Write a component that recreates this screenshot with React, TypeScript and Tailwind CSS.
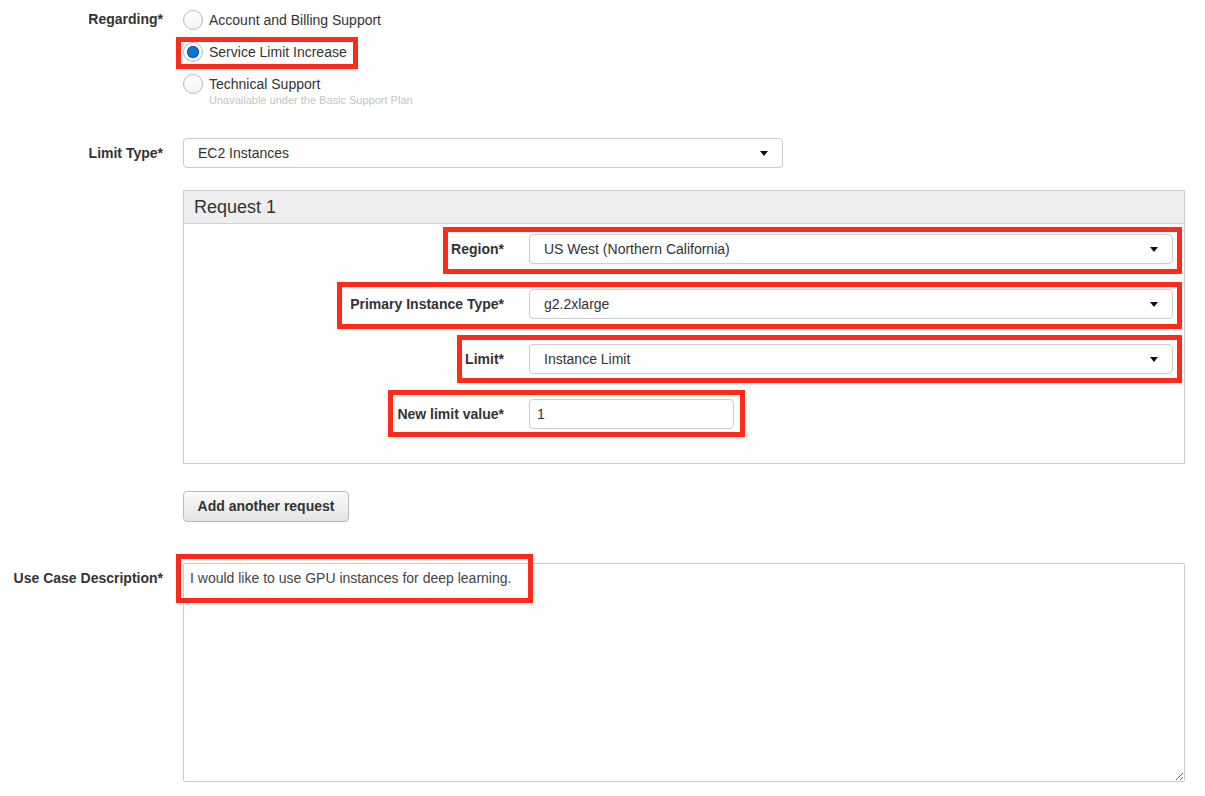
import React from 'react';

const RED = 'border-[5px] border-[#ff2a1a]';

const Radio = ({ checked }: { checked?: boolean }) => (
  <span className="flex h-[20px] w-[20px] shrink-0 items-center justify-center rounded-full border border-[#b9b9b9] bg-gradient-to-b from-white to-[#f3f3f3]">
    {checked && (
      <span className="h-[12px] w-[12px] rounded-full bg-[#0b74d1] shadow-[inset_0_0_0_1px_#0a5fae]" />
    )}
  </span>
);

const Caret = () => (
  <svg width="8" height="5" viewBox="0 0 8 5" className="shrink-0">
    <path d="M0 0 H8 L4 5 Z" fill="#111" />
  </svg>
);

const Select = ({ value, className }: { value: string; className: string }) => (
  <div
    className={`flex h-[30px] items-center justify-between rounded-[4px] border border-[#cccccc] bg-white pl-[14px] pr-[14px] text-[14px] text-[#333] ${className}`}
  >
    <span>{value}</span>
    <Caret />
  </div>
);

const RequestRow = ({
  label,
  children,
  box,
}: {
  label: string;
  children: React.ReactNode;
  box: string;
}) => (
  <div className="relative flex h-[30px] items-center">
    <div className="w-[320px] text-right text-[14px] font-bold text-[#333]">{label}</div>
    <div className="ml-[25px] flex">{children}</div>
    <div className={`absolute ${RED} ${box}`} />
  </div>
);

export default function App() {
  return (
    <div className="h-[796px] w-[1205px] overflow-hidden bg-white font-['Liberation_Sans',Arial,sans-serif] text-[14px] text-[#333]">
      {/* Regarding */}
      <div className="flex pt-[9px]">
        <div className="w-[163px] text-right font-bold leading-[20px]">Regarding*</div>
        <div className="ml-[20px] flex flex-col gap-[12px] pt-[1px]">
          <div className="flex h-[20px] items-center gap-[6px]">
            <Radio />
            <span>Account and Billing Support</span>
          </div>
          <div className="relative flex h-[20px] items-center gap-[6px]">
            <Radio checked />
            <span>Service Limit Increase</span>
            <div className={`absolute left-[-7px] top-[-5px] h-[32px] w-[182px] ${RED}`} />
          </div>
          <div className="flex items-start gap-[6px]">
            <Radio />
            <div className="flex flex-col">
              <span className="leading-[20px]">Technical Support</span>
              <span className="text-[11px] leading-[13px] text-[#c4c4c4]">
                Unavailable under the Basic Support Plan
              </span>
            </div>
          </div>
        </div>
      </div>

      {/* Limit type */}
      <div className="mt-[31px] flex items-center">
        <div className="w-[163px] text-right font-bold">Limit Type*</div>
        <Select value="EC2 Instances" className="ml-[20px] w-[600px]" />
      </div>

      {/* Request panel */}
      <div className="ml-[183px] mt-[22px] w-[1002px] border border-[#cccccc]">
        <div className="flex h-[33px] items-center border-b border-[#d5d5d5] bg-[#eeeeee] pl-[10px] text-[18px] font-light text-[#333]">
          Request 1
        </div>
        <div className="flex flex-col gap-[25px] pb-[34px] pr-[10px] pt-[10px]">
          <RequestRow label="Region*" box="left-[259px] top-[-7px] h-[47px] w-[739px]">
            <Select value="US West (Northern California)" className="w-[644px]" />
          </RequestRow>
          <RequestRow label="Primary Instance Type*" box="left-[153px] top-[-7px] h-[47px] w-[845px]">
            <Select value="g2.2xlarge" className="w-[644px]" />
          </RequestRow>
          <RequestRow label="Limit*" box="left-[273px] top-[-9px] h-[48px] w-[725px]">
            <Select value="Instance Limit" className="w-[644px]" />
          </RequestRow>
          <RequestRow label="New limit value*" box="left-[204px] top-[-9px] h-[47px] w-[357px]">
            <div className="flex h-[30px] w-[205px] items-center rounded-[4px] border border-[#cccccc] bg-white pl-[7px] text-[14px] text-[#333]">
              1
            </div>
          </RequestRow>
        </div>
      </div>

      {/* Add request */}
      <div className="ml-[183px] mt-[27px]">
        <button className="h-[31px] w-[166px] rounded-[4px] border border-[#bbbbbb] bg-gradient-to-b from-[#fbfbfb] to-[#e4e4e4] text-[14px] font-bold text-[#333]">
          Add another request
        </button>
      </div>

      {/* Use case */}
      <div className="mt-[41px] flex">
        <div className="w-[163px] pt-[7px] text-right font-bold leading-[17px]">Use Case Description*</div>
        <div className="relative ml-[20px]">
          <textarea
            defaultValue="I would like to use GPU instances for deep learning."
            className="block h-[219px] w-[1002px] rounded-[2px] border border-[#cccccc] px-[6px] pt-[6px] text-[14px] leading-[17px] text-[#444] outline-none"
          />
          <div className={`absolute left-[-7px] top-[-9px] h-[49px] w-[357px] ${RED}`} />
        </div>
      </div>
    </div>
  );
}
